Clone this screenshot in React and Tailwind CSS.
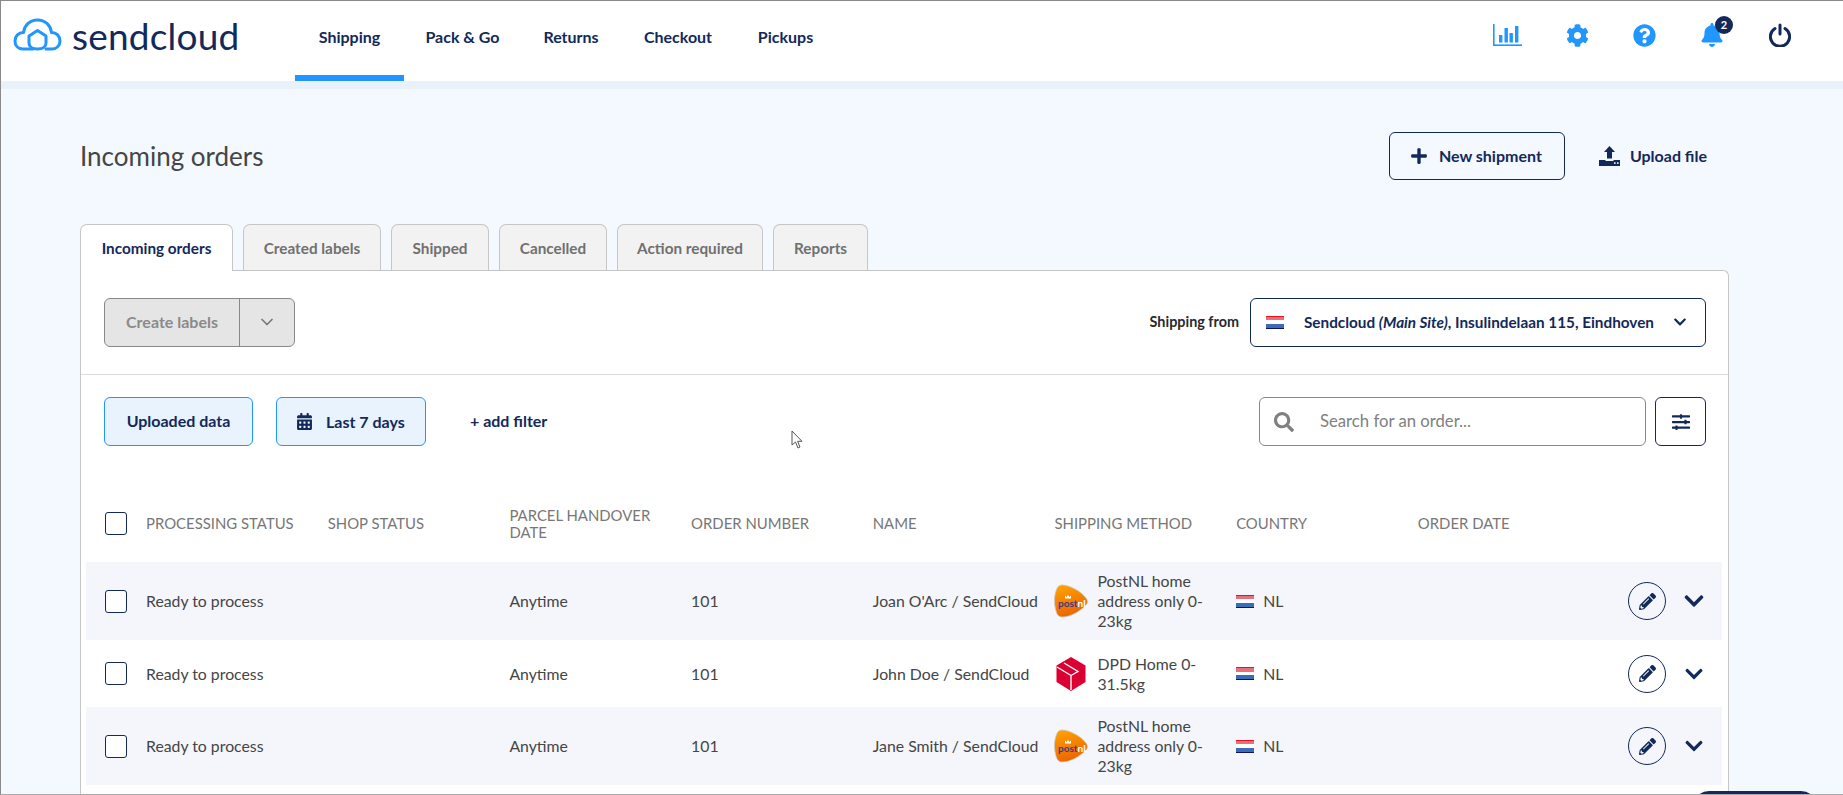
import React from "react";
import { FaCog, FaQuestionCircle, FaBell, FaPlus, FaSearch, FaCalendarAlt, FaSlidersH, FaPencilAlt, FaChevronDown } from "react-icons/fa";
import { ChevronDown } from "lucide-react";

const Logo = () => (
  <svg width="50" height="34" viewBox="0 0 50 34" fill="none" stroke="#2196ff" strokeWidth="3" strokeLinejoin="round" strokeLinecap="round">
    <path d="M20 31H10C5 31 2 27.5 2 23C2 18 5.5 14.5 10.5 14.5C11.5 7 17 2 24.5 2C32 2 37.5 7 38.5 14.5C43.5 14.5 47 18 47 23C47 27.5 43.5 31 39 31H33" />
    <path d="M24.5 12.5L33 18V25C33 28.5 30 31 24.5 31C19 31 16 28.5 16 25V18Z" />
  </svg>
);

const Stats = () => (
  <svg width="29" height="22" viewBox="0 0 29 22" fill="#2196ff">
    <rect x="0" y="0" width="1.6" height="22" />
    <rect x="0" y="20.4" width="29" height="1.6" />
    <rect x="6" y="11" width="3.4" height="7.5" />
    <rect x="11.5" y="4" width="3.4" height="14.5" />
    <rect x="16.5" y="9" width="3.4" height="9.5" />
    <rect x="22" y="2" width="3.4" height="16.5" />
  </svg>
);

const Power = () => (
  <svg width="22" height="24" viewBox="0 0 22 24" fill="none" stroke="#12295a" strokeWidth="3" strokeLinecap="round">
    <path d="M6 5.5A9.6 9.6 0 1 0 16 5.5" />
    <path d="M11 2V11" />
  </svg>
);

const UploadIcon = () => (
  <svg width="21" height="20" viewBox="0 0 21 20" fill="#12295a">
    <path d="M10.5 0L16 6H13V12.5H8V6H5Z" />
    <path d="M0 14H6.5V15H14.5V14H21V20H0Z" />
    <rect x="15" y="16.3" width="1.6" height="1.6" fill="#f4f8ff" />
    <rect x="18" y="16.3" width="1.6" height="1.6" fill="#f4f8ff" />
  </svg>
);

const Flag = () => (
  <span className="flex flex-col w-[18px] h-[13px] overflow-hidden border-t border-b border-t-[#e8141c] border-b-[#10145c]">
    <span className="flex-1 bg-[#e8707c]" />
    <span className="flex-1 bg-white" />
    <span className="flex-1 bg-[#3a6cb8]" />
  </span>
);

const PostNL = () => (
  <svg width="34" height="34" viewBox="0 0 34 34">
    <defs>
      <linearGradient id="pnl" x1="0.3" y1="0" x2="0.6" y2="1">
        <stop offset="0" stopColor="#ffa000" />
        <stop offset="1" stopColor="#ea6100" />
      </linearGradient>
    </defs>
    <path d="M8 1C15 1 27 7 32 14C34.5 17 33.5 20 31 22C26 27 17 33 8 33C5 33 3 31 2 27C0 20 0 13 2 7C3 3 5 1 8 1Z" fill="url(#pnl)" stroke="#c8c8c8" strokeWidth="0.8" />
    <path d="M11 11.5L12.5 13L14 11L15.5 13L17 11.5V14.5H11Z" fill="#fff" />
    <text x="4" y="23" fontSize="10" fontWeight="700" fill="#3d3a80" fontFamily="Lato, sans-serif">post<tspan fill="#fff">nl</tspan></text>
  </svg>
);

const DPD = () => (
  <svg width="30" height="34" viewBox="0 0 30 34">
    <path d="M15 0L29.5 8.5V25L15 34L0.5 25V8.5Z" fill="#dc0032" />
    <path d="M15 18.5L15 33M15 18.5L1 10M15 18.5L22 14.5L8 6" fill="none" stroke="#fff" strokeWidth="1.4" />
  </svg>
);

const cols = "grid grid-cols-[41px_181.7px_181.7px_181.7px_181.7px_181.7px_181.7px_181.7px_1fr] items-center pl-[19px]";

const Checkbox = () => (
  <span className="block w-[22px] h-[23px] rounded-[3px] border border-[#12295a] bg-white" />
);

const Row = ({ name, logo, method, h, shaded, big }) => (
  <div className={`${cols} ${h} ${shaded ? "bg-[#f4f6fb]" : "bg-white"}`}>
    <Checkbox />
    <span>Ready to process</span>
    <span />
    <span>Anytime</span>
    <span>101</span>
    <span className="whitespace-nowrap">{name}</span>
    <div className="flex items-center">
      <span className="flex justify-center w-[34px] shrink-0">{logo}</span>
      <span className="ml-[9px] leading-5 w-[112px]">{method}</span>
    </div>
    <div className="flex items-center gap-[9px]">
      <Flag />
      <span>NL</span>
    </div>
    <div className="flex items-center justify-end pr-[18px]">
      <span className="flex items-center justify-center w-[38px] h-[38px] rounded-full border border-[#12295a] text-[#12295a] text-[17px]">
        <FaPencilAlt />
      </span>
      <span className="flex justify-center w-[20px] ml-[18px]">
        <FaChevronDown className={`text-[#12295a] ${big ? "text-[22px]" : "text-[20px]"}`} />
      </span>
    </div>
  </div>
);

const tabs = [
  ["Created labels", "w-[138px]"],
  ["Shipped", "w-[98px]"],
  ["Cancelled", "w-[108px]"],
  ["Action required", "w-[146px]"],
  ["Reports", "w-[95px]"],
];

const navItems = [
  ["Shipping", "w-[109px] border-[#2196ff]"],
  ["Pack & Go", "w-[117px] border-transparent"],
  ["Returns", "w-[100px] border-transparent"],
  ["Checkout", "w-[114px] border-transparent"],
  ["Pickups", "w-[101px] border-transparent"],
];

export default function App() {
  return (
    <div className="relative w-[1843px] h-[795px] overflow-hidden flex flex-col bg-[#f4f8ff] border-l border-t border-b border-l-[#8a8a8a] border-t-[#8a8a8a] border-b-[#aaaaaa] font-['Lato',sans-serif] text-[15.8px] text-[#454545]">
      <header className="relative z-10 h-[80px] shrink-0 bg-white flex items-stretch shadow-[0_8px_0_#e9f2fb]">
        <div className="flex items-center pl-[12px] pb-[12px] w-[294px] shrink-0">
          <Logo />
          <span className="ml-[9px] text-[37px] leading-none text-[#12295a] font-['Lato',sans-serif] tracking-[0.2px]">sendcloud</span>
        </div>
        <nav className="flex items-stretch text-[16px] font-bold text-[#12295a]">
          {navItems.map(([t, c]) => (
            <a key={t} className={`flex items-center justify-center pb-[2px] border-b-[6px] ${c}`}>{t}</a>
          ))}
        </nav>
        <div className="ml-auto flex items-center pr-[52px] pb-[12px] text-[#2196ff]">
          <Stats />
          <FaCog className="ml-[44px] text-[23px]" />
          <FaQuestionCircle className="ml-[44px] text-[23px]" />
          <div className="relative ml-[44px]">
            <FaBell className="text-[24px]" />
            <span className="absolute -top-[7px] -right-[9px] flex items-center justify-center w-[18px] h-[18px] rounded-full bg-[#12295a] text-white text-[11px] font-bold">2</span>
          </div>
          <span className="ml-[45px] flex"><Power /></span>
        </div>
      </header>

      <main className="flex-1 flex flex-col pl-[79px] pr-[114px] pt-[51px] min-h-0">
        <div className="flex items-center justify-between h-[48px] shrink-0">
          <h1 className="text-[26px] text-[#454545] leading-none">Incoming orders</h1>
          <div className="flex items-center pr-[22px] font-bold text-[16px] text-[#12295a]">
            <button className="flex items-center h-[48px] w-[176px] pl-[20px] rounded-[6px] border border-[#12295a]">
              <FaPlus className="text-[18px]" />
              <span className="ml-[11px]">New shipment</span>
            </button>
            <span className="ml-[34px] flex"><UploadIcon /></span>
            <span className="ml-[10px]">Upload file</span>
          </div>
        </div>

        <div className="flex mt-[44px] shrink-0 gap-[10px] relative z-10 -mb-px text-[15.3px] font-bold">
          <div className="w-[153px] h-[47px] pt-[1px] flex items-center justify-center rounded-t-[7px] border border-b-0 border-[#c6c6c6] bg-white text-[#12295a]">Incoming orders</div>
          {tabs.map(([t, w]) => (
            <div key={t} className={`${w} h-[46px] pt-[1px] flex items-center justify-center rounded-t-[7px] border border-b-0 border-[#c6c6c6] bg-[#f2f2f2] text-[#707070]`}>{t}</div>
          ))}
        </div>

        <section className="flex-1 min-h-0 bg-white border border-b-0 border-[#c6c6c6] rounded-tr-[6px]">
          <div className="flex items-center justify-between h-[104px] pl-[23px] pr-[22px] pb-[1px] border-b border-[#dcdcdc]">
            <div className="flex h-[49px] w-[191px] rounded-[6px] border border-[#888] bg-[#e5e5e5] text-[#8a8a8a] font-bold text-[16px]">
              <span className="w-[135px] flex items-center justify-center border-r border-[#888]">Create labels</span>
              <span className="flex-1 flex items-center justify-center text-[#777]"><ChevronDown size={20} strokeWidth={2} /></span>
            </div>
            <div className="flex items-center">
              <span className="text-[14.4px] font-bold text-[#2a2a2a] mr-[11px]">Shipping from</span>
              <div className="flex items-center w-[456px] h-[49px] rounded-[6px] border border-[#12295a] pl-[15px] text-[15.3px] font-bold text-[#12295a] whitespace-nowrap">
                <Flag />
                <span className="ml-[20px]">Sendcloud <i className="font-bold">(Main Site)</i>, Insulindelaan 115, Eindhoven</span>
                <FaChevronDown className="ml-auto mr-[18px] text-[14px]" />
              </div>
            </div>
          </div>

          <div className="flex items-center h-[49px] mt-[22px] pl-[23px] pr-[22px] text-[#12295a] font-bold text-[16px]">
            <span className="flex items-center justify-center w-[149px] h-full pb-[1px] rounded-[6px] border border-[#2196ff] bg-[#e9f3fd]">Uploaded data</span>
            <span className="flex items-center w-[150px] h-full ml-[23px] pl-[19px] rounded-[6px] border border-[#2196ff] bg-[#e9f3fd]">
              <FaCalendarAlt className="text-[17px]" />
              <span className="ml-[13px]">Last 7 days</span>
            </span>
            <span className="ml-[44px] pb-[1px]">+ add filter</span>
            <div className="ml-auto flex items-center w-[387px] h-full rounded-[6px] border border-[#888] pl-[14px] bg-white">
              <FaSearch className="text-[#808080] text-[20px]" />
              <span className="ml-[26px] text-[16.7px] font-normal text-[#808080]">Search for an order...</span>
            </div>
            <span className="flex items-center justify-center w-[51px] h-full ml-[9px] rounded-[6px] border border-[#12295a] text-[18px]">
              <FaSlidersH />
            </span>
          </div>

          <div className="px-[5px] pr-[6px] mt-[39px]">
            <div className={`${cols} h-[77px] text-[14.9px] text-[#777] leading-[17px]`}>
              <Checkbox />
              <span>PROCESSING STATUS</span>
              <span>SHOP STATUS</span>
              <span className="w-[150px]">PARCEL HANDOVER DATE</span>
              <span>ORDER NUMBER</span>
              <span>NAME</span>
              <span>SHIPPING METHOD</span>
              <span>COUNTRY</span>
              <span>ORDER DATE</span>
            </div>
            <Row shaded big h="h-[78px]" name="Joan O'Arc / SendCloud" logo={<PostNL />} method="PostNL home address only 0-23kg" />
            <Row h="h-[67px]" name="John Doe / SendCloud" logo={<DPD />} method="DPD Home 0-31.5kg" />
            <Row shaded h="h-[78px]" name="Jane Smith / SendCloud" logo={<PostNL />} method="PostNL home address only 0-23kg" />
          </div>
        </section>
      </main>

      <svg className="absolute left-[790px] top-[429px]" width="13" height="19" viewBox="0 0 13 19">
        <path d="M1 1V15L4.5 12L7 18L9 17L6.6 11.3H11Z" fill="#fff" stroke="#555" strokeWidth="1" />
      </svg>
      <div className="absolute left-[1692px] top-[790px] w-[124px] h-[20px] rounded-t-[16px] bg-[#12295a]" />
    </div>
  );
}
